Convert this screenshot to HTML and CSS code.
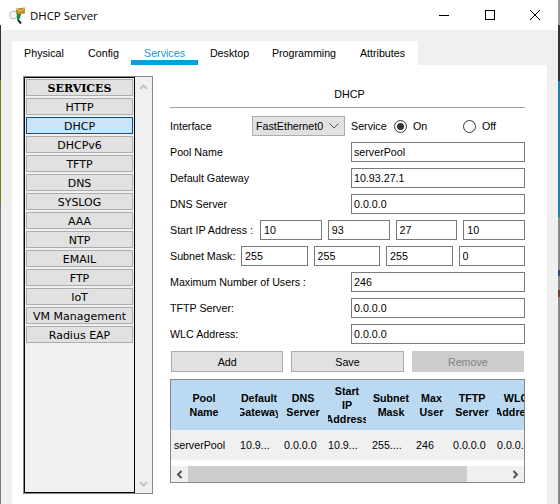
FILE: index.html
```html
<!DOCTYPE html>
<html lang="en">
<head>
    <meta charset="UTF-8">
    <meta name="viewport" content="width=device-width, initial-scale=1.0">
    <title>DHCP Server</title>
    <link rel="stylesheet" href="styles.css">
</head>
<body>
    <div class="window">
        <div class="edge-left"></div>
        <div class="main">
            <div class="titlebar">
                <svg class="app-icon" width="17" height="17" viewBox="0 0 17 17">
                    <circle cx="4.5" cy="8" r="4" fill="#f4f4f4" stroke="#b4b8b4"/>
                    <path d="M7 1.5 L16 0.5 V6.5 L7 7.5 Z" fill="#b98f2e"/>
                    <path d="M7 1.5 L12 4.5 L16 0.5" fill="none" stroke="#f0d98a"/>
                    <path d="M8 7 H12 L11 11 L9.5 13 H8 Z" fill="#0f8f3a"/>
                    <path d="M9 13 L12 16.5" stroke="#2a2a2a" stroke-width="2"/>
                </svg>
                <span class="app-title">DHCP Server</span>
                <div class="controls">
                    <span class="control">
                        <svg width="12" height="12" viewBox="0 0 12 12"><path d="M1 6.5 H11" stroke="#000" fill="none"/></svg>
                    </span>
                    <span class="control">
                        <svg width="12" height="12" viewBox="0 0 12 12"><rect x="1.5" y="1.5" width="9" height="9" stroke="#000" fill="none"/></svg>
                    </span>
                    <span class="control">
                        <svg width="12" height="12" viewBox="0 0 12 12"><path d="M1 1 L11 11 M11 1 L1 11" stroke="#000" fill="none"/></svg>
                    </span>
                </div>
            </div>

            <div class="chrome">
                <div class="tabs">
                    <span class="tab">Physical</span>
                    <span class="tab">Config</span>
                    <span class="tab active">Services</span>
                    <span class="tab">Desktop</span>
                    <span class="tab">Programming</span>
                    <span class="tab">Attributes</span>
                </div>

                <div class="panel">
                    <div class="sidebar">
                        <div class="service-list">
                            <div class="service heading">SERVICES</div>
                            <div class="service">HTTP</div>
                            <div class="service selected">DHCP</div>
                            <div class="service">DHCPv6</div>
                            <div class="service">TFTP</div>
                            <div class="service">DNS</div>
                            <div class="service">SYSLOG</div>
                            <div class="service">AAA</div>
                            <div class="service">NTP</div>
                            <div class="service">EMAIL</div>
                            <div class="service">FTP</div>
                            <div class="service">IoT</div>
                            <div class="service">VM Management</div>
                            <div class="service">Radius EAP</div>
                        </div>
                        <div class="side-scroll">
                            <svg width="9" height="7" viewBox="0 0 9 7"><path d="M1 6 L4.5 2.5 L8 6" fill="none" stroke="#c4c4c4" stroke-width="2"/></svg>
                            <svg width="9" height="7" viewBox="0 0 9 7"><path d="M1 1 L4.5 4.5 L8 1" fill="none" stroke="#c4c4c4" stroke-width="2"/></svg>
                        </div>
                    </div>

                    <div class="form">
                        <div class="form-title">DHCP</div>

                        <div class="row first">
                            <span class="label-interface">Interface</span>
                            <div class="select">
                                <span>FastEthernet0</span>
                                <svg width="10" height="6" viewBox="0 0 10 6"><path d="M0.5 0.5 L5 5 L9.5 0.5" fill="none" stroke="#555"/></svg>
                            </div>
                            <span class="label-service">Service</span>
                            <span class="radio on"></span>
                            <span class="label-on">On</span>
                            <span class="radio"></span>
                            <span class="label-off">Off</span>
                        </div>

                        <div class="row">
                            <span class="label">Pool Name</span>
                            <input class="field" type="text" value="serverPool">
                        </div>
                        <div class="row">
                            <span class="label">Default Gateway</span>
                            <input class="field" type="text" value="10.93.27.1">
                        </div>
                        <div class="row">
                            <span class="label">DNS Server</span>
                            <input class="field" type="text" value="0.0.0.0">
                        </div>
                        <div class="row">
                            <span class="label-start">Start IP Address :</span>
                            <div class="octets">
                                <input class="field" type="text" value="10">
                                <input class="field" type="text" value="93">
                                <input class="field" type="text" value="27">
                                <input class="field" type="text" value="10">
                            </div>
                        </div>
                        <div class="row">
                            <span class="label-mask">Subnet Mask:</span>
                            <div class="octets">
                                <input class="field" type="text" value="255">
                                <input class="field" type="text" value="255">
                                <input class="field" type="text" value="255">
                                <input class="field" type="text" value="0">
                            </div>
                        </div>
                        <div class="row">
                            <span class="label">Maximum Number of Users :</span>
                            <input class="field" type="text" value="246">
                        </div>
                        <div class="row">
                            <span class="label">TFTP Server:</span>
                            <input class="field" type="text" value="0.0.0.0">
                        </div>
                        <div class="row">
                            <span class="label">WLC Address:</span>
                            <input class="field" type="text" value="0.0.0.0">
                        </div>

                        <div class="buttons">
                            <button type="button">Add</button>
                            <button type="button">Save</button>
                            <button type="button" class="disabled">Remove</button>
                        </div>

                        <div class="pool-table">
                            <div class="table-cols table-head">
                                <div class="head"><span>Pool<br>Name</span></div>
                                <div class="head"><span>Default<br>Gateway</span></div>
                                <div class="head"><span>DNS<br>Server</span></div>
                                <div class="head"><span>Start<br>IP<br>Address</span></div>
                                <div class="head"><span>Subnet<br>Mask</span></div>
                                <div class="head"><span>Max<br>User</span></div>
                                <div class="head"><span>TFTP<br>Server</span></div>
                                <div class="head"><span>WLC<br>Address</span></div>
                            </div>
                            <div class="table-cols table-row">
                                <div class="cell">serverPool</div>
                                <div class="cell">10.9...</div>
                                <div class="cell">0.0.0.0</div>
                                <div class="cell">10.9...</div>
                                <div class="cell">255....</div>
                                <div class="cell">246</div>
                                <div class="cell">0.0.0.0</div>
                                <div class="cell">0.0.0.0</div>
                            </div>
                            <div class="table-gap"></div>
                            <div class="h-scroll">
                                <svg width="7" height="9" viewBox="0 0 7 9"><path d="M5.5 1 L2 4.5 L5.5 8" fill="none" stroke="#555" stroke-width="2"/></svg>
                                <div class="thumb-track"><div class="thumb"></div></div>
                                <svg width="7" height="9" viewBox="0 0 7 9"><path d="M1.5 1 L5 4.5 L1.5 8" fill="none" stroke="#555" stroke-width="2"/></svg>
                            </div>
                        </div>
                    </div>
                </div>
            </div>
        </div>
        <div class="edge-right"></div>
    </div>
</body>
</html>
```

FILE: styles.css
```css
html, body {
    margin: 0;
    padding: 0;
}
body {
    font-family: "Liberation Sans", Arial, sans-serif;
    font-size: 10.7px;
    color: #000;
    background-color: #fff;
}
.window {
    display: flex;
    width: 560px;
    height: 504px;
    overflow: hidden;
}
.edge-left {
    width: 1px;
    background: linear-gradient(#fff 0, #fff 25px, #333 25px, #333 80px, #7d7a1c 80px, #7d7a1c 203px, #777 203px);
}
.edge-right {
    width: 2px;
    background: linear-gradient(#999 0, #999 25px, #333 25px, #333 81px, #1a7fb5 81px, #1a7fb5 217px, #888 217px, #888 270px, #2b4a78 270px, #2b4a78 276px, #888 276px, #888 290px, #7a3a1c 290px, #7a3a1c 297px, #888 297px);
}
.main {
    width: 557px;
}

/* title bar */
.titlebar {
    display: flex;
    align-items: center;
    height: 30px;
}
.app-icon {
    margin-left: 8px;
}
.app-title {
    margin-left: 4px;
    font-family: "Open Sans", sans-serif;
    font-size: 11.4px;
}
.controls {
    display: flex;
    margin-left: auto;
}
.control {
    display: flex;
    align-items: center;
    justify-content: center;
    width: 45.6px;
    height: 30px;
}

/* tabs */
.chrome {
    height: 474px;
    padding: 11px 11px 0;
    box-sizing: border-box;
    background-color: #f0f0f0;
}
.tabs {
    display: grid;
    grid-template-columns: 64px 55px 67px 63px 86px 71px;
    width: 406px;
    height: 24px;
    background-color: #fff;
}
.tab {
    height: 24px;
    line-height: 24px;
    text-align: center;
    box-sizing: border-box;
}
.tab.active {
    color: #1b94d2;
    border-bottom: 5px solid #0a9fdc;
}

.panel {
    display: flex;
    height: 439px;
    padding: 11px 0 0 11px;
    box-sizing: border-box;
    background-color: #fff;
}

/* services list */
.sidebar {
    display: flex;
    width: 130px;
    height: 418px;
    box-sizing: border-box;
    border: 1px solid #828790;
    background-color: #f0f0f0;
}
.service-list {
    display: flex;
    flex-direction: column;
    gap: 2px;
    width: 111px;
    padding: 1px;
    box-sizing: border-box;
    border: 1px solid #000;
    font-family: "DejaVu Sans", sans-serif;
    font-size: 11px;
}
.service {
    height: 17px;
    line-height: 17px;
    text-align: center;
    white-space: nowrap;
    box-sizing: border-box;
    border: 1px solid #adadad;
    background-color: #e1e1e1;
}
.service.heading {
    font-family: "DejaVu Serif", serif;
    font-weight: bold;
}
.service.selected {
    border-color: #005499;
    background-color: #cce4f7;
}
.side-scroll {
    display: flex;
    flex-direction: column;
    justify-content: space-between;
    align-items: center;
    flex: 1;
    padding: 6px 0 5px;
}

/* form */
.form {
    width: 355px;
    margin-left: 17px;
}
.form-title {
    height: 22px;
    margin-top: 9px;
    padding-left: 4px;
    line-height: 19px;
    text-align: center;
    border-bottom: 1px solid #a0a0a0;
}
.row {
    display: flex;
    align-items: center;
    height: 20px;
    margin-top: 6px;
}
.row.first {
    margin-top: 8px;
}
.label {
    width: 181px;
}
.label-interface {
    width: 82px;
}
.label-start {
    width: 90px;
}
.label-mask {
    width: 71px;
}
.select {
    display: flex;
    align-items: center;
    justify-content: space-between;
    width: 93px;
    height: 20px;
    padding: 0 5px 0 3px;
    box-sizing: border-box;
    border: 1px solid #adadad;
    background-color: #e1e1e1;
}
.label-service {
    margin-left: 6px;
    width: 43px;
}
.radio {
    position: relative;
    width: 13px;
    height: 13px;
    box-sizing: border-box;
    border: 1px solid #333;
    border-radius: 50%;
    background-color: #fff;
}
.radio.on::after {
    content: "";
    position: absolute;
    left: 2px;
    top: 2px;
    width: 7px;
    height: 7px;
    border-radius: 50%;
    background-color: #333;
}
.label-on {
    width: 50px;
    margin-left: 6px;
    box-sizing: border-box;
}
.label-off {
    margin-left: 6px;
}
.field {
    width: 174px;
    height: 20px;
    margin: 0;
    padding: 0 2px;
    box-sizing: border-box;
    border: 1px solid #7a7a7a;
    border-radius: 0;
    outline: none;
    font-family: inherit;
    font-size: inherit;
    color: #000;
}
.octets {
    display: flex;
    gap: 6px;
    flex: 1;
}
.octets .field {
    flex: 1;
    width: 0;
    min-width: 0;
    padding: 0 3px;
}

/* buttons */
.buttons {
    display: grid;
    grid-template-columns: repeat(3, 1fr);
    gap: 8px;
    height: 21px;
    margin-top: 7px;
    padding: 0 1px;
}
button {
    margin: 0;
    padding: 0;
    font-family: inherit;
    font-size: inherit;
    color: #000;
    border: 1px solid #adadad;
    border-radius: 0;
    background-color: #e1e1e1;
}
button.disabled {
    color: #838383;
    border-color: #cccccc;
    background-color: #cccccc;
}

/* table */
.pool-table {
    height: 104px;
    margin-top: 7px;
    overflow: hidden;
    box-sizing: border-box;
    border: 1px solid #828790;
    background-color: #fff;
}
.table-cols {
    display: grid;
    grid-template-columns: 66px 44px 44px 44px 44px 37px 44px 44px;
    width: 367px;
}
.table-head {
    height: 50px;
    background-color: #bbdaf1;
}
.head {
    display: flex;
    align-items: center;
    justify-content: center;
    margin: 0 3px;
    overflow: hidden;
    font-weight: bold;
    line-height: 14px;
    text-align: center;
    white-space: nowrap;
}
.table-row {
    height: 30px;
    line-height: 30px;
    background-color: #f0f0f0;
}
.cell {
    padding-left: 3px;
    overflow: hidden;
    white-space: nowrap;
}
.table-gap {
    height: 6px;
}
.h-scroll {
    display: flex;
    align-items: center;
    height: 16px;
    padding: 0 5px;
    background-color: #f0f0f0;
}
.thumb-track {
    flex: 1;
    height: 100%;
    padding: 0 0 0 5px;
}
.thumb {
    width: 279px;
    height: 100%;
    background-color: #cdcdcd;
}
```
